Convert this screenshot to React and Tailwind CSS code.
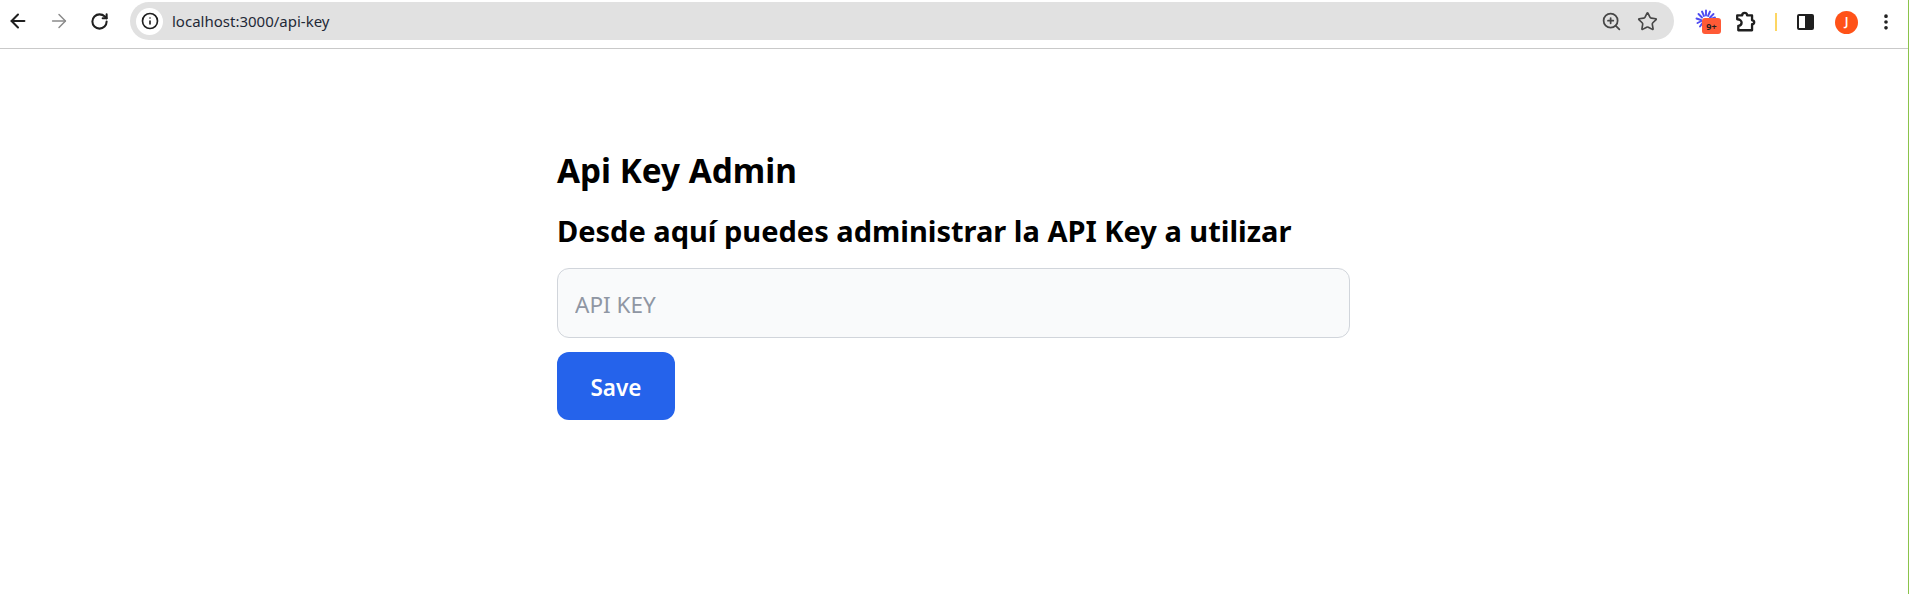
import React from 'react';
import { ArrowLeft, ArrowRight, RotateCw, Info, ZoomIn, Star, MoreVertical } from 'lucide-react';

function PuzzleIcon() {
  return (
    <svg width="22" height="22" viewBox="0 0 20 20" fill="none" stroke="#1f1f1f" strokeWidth="2.100" strokeLinejoin="round">
      <path d="M2 4h4.500c0-3 4.500-3 4.500 0h4.500v4.500c2.600 0 2.600 3.500 0 3.500v5.500H3v-4c2.500 0 3-1.500 3-3s-1.500-3-4-3z" />
    </svg>
  );
}

function ExtensionBadge() {
  return (
    <div className="relative w-[26px] h-[26px]">
      <svg width="22" height="22" viewBox="0 0 22 22" stroke="#4f4bf0" strokeWidth="1.900" strokeLinecap="round" className="absolute left-0 top-0">
        <path d="M11 1.500v5M15 2.500l-2 4.500M18.500 5l-3.500 3.500M20 8.500l-4 1.500M7 2.500l2 4.500M3.500 5l3.500 3.500M1.500 9.500l4.500 1.500M2.500 14l4-2M5 17.500l2.500-3.500" />
      </svg>
      <div className="absolute left-[7px] top-[9px] w-[19px] h-[16px] rounded-[3px] bg-[#ff5a36] flex items-center justify-center text-[9px] font-bold leading-none text-[#1f1f1f]">
        9+
      </div>
    </div>
  );
}

function Toolbar() {
  return (
    <div className="h-[49px] flex items-center border-b border-[#c9c9c9] bg-white">
      <div className="w-[130px] -mt-[6px] flex items-center pl-[7px] shrink-0">
        <ArrowLeft size={22} strokeWidth={2.200} className="text-[#1f1f1f]" />
        <ArrowRight size={22} strokeWidth={1.600} className="ml-[19px] text-[#8a8a8a]" />
        <RotateCw size={19} strokeWidth={2.600} className="ml-[20px] text-[#1f1f1f]" />
      </div>
      <div className="w-[1544px] h-[38px] -mt-[6px] rounded-full bg-[#e1e1e1] flex items-center pl-[6px] pr-[16px] shrink-0">
        <div className="w-[27px] h-[27px] rounded-full bg-white flex items-center justify-center">
          <Info size={18} strokeWidth={2.200} className="text-[#1f1f1f]" />
        </div>
        <span className="ml-[9px] text-[15px] text-[#1f2937]">localhost:3000/api-key</span>
        <div className="ml-auto flex items-center gap-[15px]">
          <ZoomIn size={21} strokeWidth={2} className="text-[#474747]" />
          <Star size={21} strokeWidth={1.900} className="text-[#474747]" />
        </div>
      </div>
      <div className="flex-1 flex items-center -mt-[4px] pl-[21px]">
        <ExtensionBadge />
        <div className="ml-[14px]"><PuzzleIcon /></div>
        <div className="ml-[18px] w-[2px] h-[18px] bg-[#fdd663]" />
        <div className="ml-[20px] w-[17px] h-[16px] rounded-[2px] border-2 border-[#1f1f1f] flex justify-end">
          <div className="w-[7px] bg-[#1f1f1f]" />
        </div>
        <div className="ml-[21px] w-[23px] h-[23px] rounded-full bg-[#ff5218] flex items-center justify-center text-white text-[12px] font-semibold">J</div>
        <MoreVertical size={20} strokeWidth={2.400} className="ml-[18px] text-[#1f1f1f]" />
      </div>
    </div>
  );
}

export default function App() {
  return (
    <div className="h-[594px] overflow-hidden bg-white border-r border-[#8bc34a] font-['Noto_Sans',sans-serif] text-black">
      <Toolbar />
      <div className="w-[793px] ml-[557px] pt-[101px]">
        <h1 className="text-[33.300px] leading-[40px] font-bold">Api Key Admin</h1>
        <h2 className="mt-[21px] text-[29px] leading-[40px] font-bold">Desde aquí puedes administrar la API Key a utilizar</h2>
        <input
          placeholder="API KEY"
          className="mt-[17px] block w-full h-[70px] px-[17px] pt-[2px] text-[22.500px] rounded-[12px] border border-[#d1d5db] bg-[#f9fafb] placeholder:text-[#8f96a3] outline-none"
        />
        <button className="mt-[14px] w-[118px] h-[68px] pt-[3px] rounded-[12px] bg-[#2563eb] text-white text-[22.500px] font-semibold">Save</button>
      </div>
    </div>
  );
}
